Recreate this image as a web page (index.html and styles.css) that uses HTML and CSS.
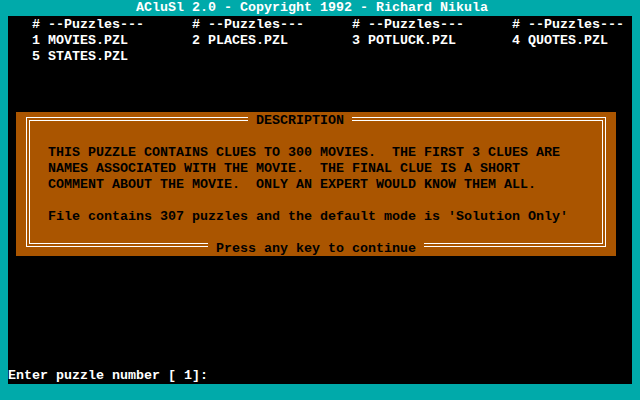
FILE: index.html
```html
<!DOCTYPE html>
<html>
<head>
<meta charset="utf-8">
<link rel="stylesheet" href="styles.css">
</head>
<body>
<div class="title">ACluSl 2.0 - Copyright 1992 - Richard Nikula</div>
<div class="screen">
  <div class="menu">
    <span class="item"># --Puzzles---</span>
    <span class="item"># --Puzzles---</span>
    <span class="item"># --Puzzles---</span>
    <span class="item"># --Puzzles---</span>
    <span class="item">1 MOVIES.PZL</span>
    <span class="item">2 PLACES.PZL</span>
    <span class="item">3 POTLUCK.PZL</span>
    <span class="item">4 QUOTES.PZL</span>
    <span class="item">5 STATES.PZL</span>
  </div>
  <div class="dialog">
    <div class="frame-outer">
      <div class="frame-inner">
        <div class="line">THIS PUZZLE CONTAINS CLUES TO 300 MOVIES.  THE FIRST 3 CLUES ARE</div>
        <div class="line">NAMES ASSOCIATED WITH THE MOVIE.  THE FINAL CLUE IS A SHORT</div>
        <div class="line">COMMENT ABOUT THE MOVIE.  ONLY AN EXPERT WOULD KNOW THEM ALL.</div>
        <div class="line"> </div>
        <div class="line">File contains 307 puzzles and the default mode is 'Solution Only'</div>
      </div>
    </div>
    <div class="label label-top">DESCRIPTION</div>
    <div class="label label-bottom">Press any key to continue</div>
  </div>
  <div class="prompt">Enter puzzle number [ 1]:</div>
</div>
</body>
</html>
```
FILE: styles.css
```css
* { box-sizing: border-box; }
html, body {
  margin: 0;
  padding: 0;
}
body {
  width: 640px;
  height: 400px;
  overflow: hidden;
  background: #00aaaa;
  font-family: "Liberation Mono", "DejaVu Sans Mono", monospace;
  font-weight: bold;
  font-size: 13.333px;
  line-height: 16px;
  color: #ffffff;
}
.title, .item, .line, .label, .prompt {
  white-space: pre;
}
.title {
  height: 16px;
  padding-left: 136px;
  color: #ffffff;
}
.screen {
  margin: 0 8px;
  height: 368px;
  background: #000000;
  display: flex;
  flex-direction: column;
}
.menu {
  display: grid;
  grid-template-columns: repeat(4, 160px);
  grid-auto-rows: 16px;
  padding-left: 24px;
  padding-top: 1px;
}
.dialog {
  position: relative;
  margin-top: 47px;
  margin-left: 8px;
  width: 600px;
  height: 144px;
  flex: none;
  background: #aa5500;
  color: #000000;
  padding: 5px 0 0 10px;
}
.frame-outer {
  width: 580px;
  height: 130px;
  border: 1px solid #ffffff;
  padding: 2px;
}
.frame-inner {
  width: 100%;
  height: 100%;
  border: 1px solid #ffffff;
  padding: 24px 0 0 18px;
}
.line {
  height: 16px;
}
.label {
  position: absolute;
  height: 16px;
  padding: 1px 8px 0;
  background: #aa5500;
  color: #000000;
}
.label-top {
  left: 232px;
  top: 0;
}
.label-bottom {
  left: 192px;
  top: 128px;
}
.prompt {
  margin-top: auto;
  height: 16px;
  color: #ffffff;
}
```
